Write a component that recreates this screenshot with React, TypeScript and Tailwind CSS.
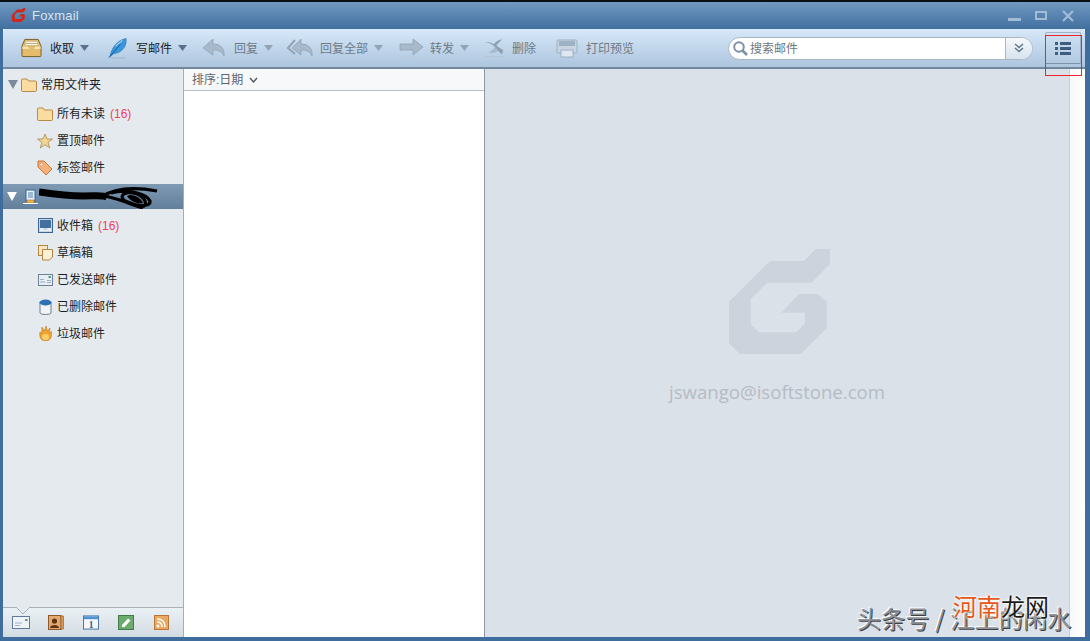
import React from "react";

const Caret = ({ c = "#5d7288" }: { c?: string }) => (
  <svg width="9" height="6" viewBox="0 0 9 6" className="shrink-0"><path d="M0 0H9L4.5 6Z" fill={c} /></svg>
);

const Tool = ({ icon, w, label, gap = 7, caret, dim, ml }: { icon: React.ReactNode; w: number; label: string; gap?: number; caret?: boolean; dim?: boolean; ml: string }) => (
  <div className={`flex items-center h-full ${ml}`}>
    <div className="flex items-center justify-center shrink-0" style={{ width: w, marginRight: gap }}>{icon}</div>
    <span className={`pt-[2px] text-[12px] leading-none whitespace-nowrap ${dim ? "text-[#6e7a86]" : "text-[#1c2026]"}`}>{label}</span>
    {caret && <div className="ml-[6px]"><Caret c={dim ? "#92a5b8" : "#5d7288"} /></div>}
  </div>
);

const Inbox = () => (
  <svg width="22" height="20" viewBox="0 0 22 20">
    <path d="M4 1H18L21 8V18Q21 19 20 19H2Q1 19 1 18V8Z" fill="#e3bd6b" stroke="#7a5a22" />
    <path d="M4.500 3H17.500V5H4.500ZM4 5.500H18V7.500H4Z" fill="#fff" stroke="#a98f5a" strokeWidth=".5" />
    <path d="M1.500 8.500H7L8.500 11H13.500L15 8.500H20.500V11H1.500Z" fill="#f6e2ad" />
  </svg>
);
const Feather = () => (
  <svg width="21" height="22" viewBox="0 0 21 22">
    <path d="M2 20C4 11 9 3 19 1C20 9 15 16 6 17Z" fill="#3b97dc" stroke="#1f6fb0" strokeWidth=".6" />
    <path d="M1 21L13 7" stroke="#0e5a9c" strokeWidth="1" />
    <path d="M8 9L15 3" stroke="#9fd3f4" strokeWidth="1.300" />
    <path d="M2 21.500H18" stroke="#9db4ca" strokeWidth="1" />
  </svg>
);
const G = "#a7b9ca";
const Reply = () => (
  <svg width="24" height="21" viewBox="0 0 24 21">
    <path d="M11 1L1 10L11 17V12C16 12 20 13 22 18C23 10 18 6 11 6Z" fill={G} stroke="#8fa3b6" strokeWidth=".8" />
    <path d="M2 20H23" stroke="#bccbd9" />
  </svg>
);
const ReplyAll = () => (
  <svg width="27" height="21" viewBox="0 0 27 21">
    <path d="M8 2L1 10L8 16" fill="none" stroke="#8fa3b6" strokeWidth="2" />
    <path d="M14 1L5 10L14 17V12C19 12 23 13 25 18C26 10 21 6 14 6Z" fill={G} stroke="#8fa3b6" strokeWidth=".8" />
    <path d="M3 20H26" stroke="#bccbd9" />
  </svg>
);
const Forward = () => (
  <svg width="24" height="21" viewBox="0 0 24 21">
    <path d="M1 6H14V1L24 9L14 17V12H1Z" fill={G} stroke="#8fa3b6" strokeWidth=".8" />
    <path d="M1 19.500H23" stroke="#bccbd9" />
  </svg>
);
const Del = () => (
  <svg width="21" height="20" viewBox="0 0 21 20">
    <path d="M1 4C6 4 10 7 14 12L19 17L20 12C16 10 14 8 13 7C15 5 17 3 19 1C16 1 13 3 10 6C7 4 4 3 1 4Z" fill="#8ea1b3" />
    <path d="M5 15C8 13 10 11 12 9L15 13C12 15 9 16 5 15Z" fill="#a7b9ca" />
    <path d="M0 19H21" stroke="#b3c3d2" />
  </svg>
);
const Printer = () => (
  <svg width="22" height="20" viewBox="0 0 22 20">
    <rect x="1" y="2" width="20" height="13" rx="1" fill="#c7d5e2" stroke="#9db0c2" />
    <rect x="3" y="3" width="16" height="5" fill="#9fb2c4" />
    <rect x="5" y="12" width="12" height="7" fill="#dfe8f0" stroke="#9db0c2" />
  </svg>
);
const Folder = ({ w = 16 }: { w?: number }) => (
  <svg width={w} height="14" viewBox="0 0 16 14">
    <path d="M.5 12.500V2Q.5 1 1.500 1H6L7.500 3H14.500Q15.500 3 15.500 4V12.500Q15.500 13.500 14.500 13.500H1.500Q.5 13.500 .5 12.500Z" fill="#fbdca0" stroke="#b78a45" />
  </svg>
);
const Star = () => (
  <svg width="16" height="16" viewBox="0 0 16 16"><path d="M8 1L10 6H15.500L11 9.500L12.800 15L8 11.700L3.200 15L5 9.500L.5 6H6Z" fill="#f0d690" stroke="#a98c50" strokeWidth=".8" /></svg>
);
const Tag = () => (
  <svg width="16" height="16" viewBox="0 0 16 16">
    <path d="M1 1H7L15 9L9 15L1 7Z" fill="#f2b27a" stroke="#c9743a" />
    <circle cx="4.500" cy="4.500" r="1.500" fill="#fff" stroke="#c9743a" strokeWidth=".6" />
  </svg>
);
const Inbox2 = () => (
  <svg width="15" height="15" viewBox="0 0 15 15">
    <rect x=".5" y=".5" width="14" height="14" fill="#c8d7e6" stroke="#3c6592" />
    <rect x="2" y="2" width="11" height="8" fill="#44709f" />
    <path d="M2 10H5L6 12H9L10 10H13V13H2Z" fill="#e8eef4" />
  </svg>
);
const Draft = () => (
  <svg width="15" height="16" viewBox="0 0 15 16">
    <rect x=".5" y=".5" width="9" height="10" fill="#f7e6c6" stroke="#b5843f" />
    <path d="M4.500 4.500H14.500V12L11.500 15H4.500Z" fill="#fbf0d8" stroke="#b5843f" />
  </svg>
);
const Sent = () => (
  <svg width="15" height="12" viewBox="0 0 15 12">
    <rect x=".5" y=".5" width="14" height="11" fill="#e6edf3" stroke="#6d8197" />
    <path d="M2 8H7M2 5.500H6M9 8.500H13M9 6.500H13" stroke="#8aa0b5" strokeWidth=".8" />
    <rect x="10.500" y="2" width="2.500" height="2" fill="#5a9a8b" />
  </svg>
);
const Trash = () => (
  <svg width="13" height="16" viewBox="0 0 13 16">
    <path d="M1 3V14Q1 15.500 6.500 15.500Q12 15.500 12 14V3Z" fill="#f0f3f6" stroke="#6f7f90" />
    <ellipse cx="6.500" cy="3.500" rx="6" ry="3" fill="#2f6fb5" />
  </svg>
);
const Flame = () => (
  <svg width="13" height="15" viewBox="0 0 13 15">
    <path d="M1 6L2.500 8L3 1L5.500 5L7 0L8.500 5L11 2L10.500 7L12.500 5.500C13.500 11 11 15 6.500 15C2 15 0 11 1 6Z" fill="#eea32e" stroke="#b8701a" strokeWidth=".5" />
    <ellipse cx="6.500" cy="11" rx="3.500" ry="3" fill="#f9cf6a" />
  </svg>
);

const Row = ({ icon, label, count }: { icon: React.ReactNode; label: string; count?: string }) => (
  <div className="flex items-center h-[27px] pl-[34px]">
    <div className="w-[16px] mr-[4px] flex justify-center items-center shrink-0">{icon}</div>
    <span className="text-[12px] leading-none text-[#1b1f24] whitespace-nowrap">{label}</span>
    {count && <span className="ml-[5px] text-[12px] leading-none text-[#ee3f5e] font-['Liberation_Sans',sans-serif]">{count}</span>}
  </div>
);

const Cell = ({ children }: { children: React.ReactNode }) => (
  <div className="w-[35.25px] flex justify-center items-center shrink-0">{children}</div>
);

export default function App() {
  return (
    <div className="relative w-[1090px] h-[641px] overflow-hidden bg-[#3f6d9e] border-t-2 border-t-[#0c0f14] flex flex-col font-['Liberation_Sans','Noto_Sans_CJK_SC',sans-serif]">
      {/* title bar */}
      <div className="h-[27px] shrink-0 flex items-center bg-gradient-to-b from-[#7199c2] to-[#41709f]">
        <svg width="15" height="14" viewBox="0 0 303 315" className="ml-[11px] mt-[-2px]">
          <path d="M260 0H303V45L247 101H115L65 151V225L90 250H202L228 223V191H157L210 135H267L293 158V238L215 315H33L0 283V158L123 36H225Z" fill="#d3261b" />
        </svg>
        <span className="ml-[6px] text-[13px] leading-none text-[#d8e4ef] font-['Liberation_Sans',sans-serif] tracking-[0.2px]">Foxmail</span>
        <div className="ml-auto mr-[16px] flex items-center">
          <div className="w-[13px] h-[3px] bg-[#a3bcd5] mt-[8px]" />
          <div className="ml-[14px] w-[12px] h-[9px] border-2 border-[#a3bcd5]" />
          <svg width="12" height="12" viewBox="0 0 12 12" className="ml-[15px]"><path d="M1 1L11 11M11 1L1 11" stroke="#a3bcd5" strokeWidth="2.200" /></svg>
        </div>
      </div>

      {/* body */}
      <div className="flex-1 min-h-0 flex flex-col ml-[3px] mr-[5px] mb-[4px] bg-white">
        {/* toolbar */}
        <div className="relative h-[40px] shrink-0 flex items-center pl-[18px] rounded-tl-[3px] rounded-tr-[3px] bg-gradient-to-b from-[#d7e8f9] to-[#adc5de] border-b-2 border-[#73879c]">
          <Tool ml="ml-0" w={21} gap={8} icon={<Inbox />} label="收取" caret />
          <Tool ml="ml-[19px]" w={20} gap={8} icon={<Feather />} label="写邮件" caret />
          <Tool ml="ml-[15px]" w={24} gap={8} icon={<Reply />} label="回复" caret dim />
          <Tool ml="ml-[14px]" w={27} gap={6} icon={<ReplyAll />} label="回复全部" caret dim />
          <Tool ml="ml-[16px]" w={24} icon={<Forward />} label="转发" caret dim />
          <Tool ml="ml-[15px]" w={20} gap={8} icon={<Del />} label="删除" dim />
          <Tool ml="ml-[20px]" w={22} gap={8} icon={<Printer />} label="打印预览" dim />
          <div className="ml-[94px] w-[305px] h-[23px] flex items-center rounded-full border border-[#a9b6c3] bg-white overflow-hidden">
            <svg width="17" height="17" viewBox="0 0 17 17" className="ml-[3px] shrink-0">
              <circle cx="7" cy="7" r="4.800" fill="none" stroke="#7d91a5" strokeWidth="2" />
              <path d="M10.500 10.500L15 15" stroke="#7d91a5" strokeWidth="2.600" />
            </svg>
            <span className="ml-[1px] pt-[1px] text-[12px] leading-none text-[#6f7780]">搜索邮件</span>
            <div className="ml-auto w-[27px] h-full border-l border-[#a9b6c3] bg-gradient-to-b from-[#f5f8fb] to-[#d8e3ee] flex items-center justify-center">
              <svg width="10" height="10" viewBox="0 0 10 10"><path d="M1 1L5 4.500L9 1M1 5L5 8.500L9 5" fill="none" stroke="#5f7488" strokeWidth="1.400" /></svg>
            </div>
          </div>
          <div className="ml-[12px] w-[36px] h-[32px] border border-[#9fb4ca] border-b-[#7f93a8] rounded-t-[2px] flex flex-col items-center justify-center gap-[2px] bg-gradient-to-b from-[#cfe1f3] to-[#b2c9e0]">
            {[0, 1, 2].map((i) => (
              <div key={i} className="flex gap-[2px]">
                <div className="w-[3px] h-[3px] bg-[#3f5e7f]" />
                <div className="w-[11px] h-[3px] bg-[#3f5e7f]" />
              </div>
            ))}
          </div>
        </div>

        {/* columns */}
        <div className="flex-1 min-h-0 flex">
          {/* sidebar */}
          <div className="w-[181px] shrink-0 flex flex-col bg-[#e5eaef] border-r border-[#a4aeb8]">
            <div className="flex items-center h-[27px] mt-[2px] pl-[5px]">
              <svg width="10" height="9" viewBox="0 0 10 9" className="shrink-0"><path d="M0 0H10L5 9Z" fill="#7a8a9a" /></svg>
              <div className="ml-[3px] mr-[4px]"><Folder /></div>
              <span className="text-[12px] leading-none text-[#1b1f24]">常用文件夹</span>
            </div>
            <div className="mt-[2px]">
              <Row icon={<Folder />} label="所有未读" count="(16)" />
              <Row icon={<Star />} label="置顶邮件" />
              <Row icon={<Tag />} label="标签邮件" />
            </div>
            <div className="mt-[3px] h-[25px] flex items-center pl-[4px] bg-gradient-to-b from-[#7f9ab3] to-[#627f9c] relative">
              <svg width="10" height="9" viewBox="0 0 10 9" className="shrink-0"><path d="M0 0H10L5 9Z" fill="#fff" /></svg>
              <svg width="15" height="16" viewBox="0 0 15 16" className="ml-[6px]">
                <rect x="3" y="1" width="9" height="11" fill="#e8f0f7" stroke="#2f66a0" />
                <path d="M5 4H10M5 6H10M5 8H10" stroke="#2f66a0" strokeWidth=".8" />
                <rect x="4" y="11" width="7" height="3" fill="#f3b545" stroke="#a56f17" strokeWidth=".6" />
                <path d="M0 14.500H15" stroke="#fff" />
              </svg>
              <svg width="122" height="25" viewBox="0 0 122 25" className="ml-[1px] shrink-0">
                <path d="M0 8C14 10 30 12 44 12C58 12 64 11 68 13" fill="none" stroke="#000" strokeWidth="7" />
                <path d="M2 9C20 13 48 12 62 13" fill="none" stroke="#000" strokeWidth="4" />
                <path d="M62 13C74 5 92 2 118 7M66 12C84 16 96 22 104 24M72 9C88 4 108 10 111 17C112 24 96 22 86 17C80 13 84 7 94 9C104 11 110 19 104 23" fill="none" stroke="#000" strokeWidth="3.200" />
                <path d="M88 12C94 9 102 14 104 19C98 20 92 18 88 12Z" fill="#000" />
              </svg>
            </div>
            <div className="mt-[3px]">
              <Row icon={<Inbox2 />} label="收件箱" count="(16)" />
              <Row icon={<Draft />} label="草稿箱" />
              <Row icon={<Sent />} label="已发送邮件" />
              <Row icon={<Trash />} label="已删除邮件" />
              <Row icon={<Flame />} label="垃圾邮件" />
            </div>
            <div className="mt-auto relative h-[30px] flex items-center border-t border-[#a8b2bb] bg-gradient-to-b from-[#e9f1f5] to-[#d4dce3]">
              <svg width="14" height="8" viewBox="0 0 14 8" className="absolute left-[13px] top-[-1px]"><path d="M0 0L7 7L14 0" fill="#e5eaef" stroke="#a8b2bb" /></svg>
              <Cell><svg width="18" height="14" viewBox="0 0 18 14"><rect x=".5" y=".5" width="17" height="12" fill="#eef3f8" stroke="#63799a" /><path d="M3 7H10M3 9.500H8" stroke="#9db2c6" /><rect x="13" y="3" width="2.500" height="2" fill="#5a9a8b" /></svg></Cell>
              <Cell><svg width="16" height="15" viewBox="0 0 16 15"><rect x=".5" y=".5" width="12.500" height="14" fill="#e6a86e" stroke="#8d5a2b" /><rect x="13" y="1" width="2.500" height="13" fill="#d99a5e" stroke="#8d5a2b" strokeWidth=".6" /><circle cx="6.500" cy="6" r="2.600" fill="#5c3517" /><path d="M2 13C2 9 11 9 11 13Z" fill="#5c3517" /></svg></Cell>
              <Cell><svg width="16" height="15" viewBox="0 0 17 15"><rect x=".5" y=".5" width="16" height="14" fill="#f4f7fa" stroke="#41729f" /><rect x="1" y="1" width="15" height="3" fill="#4f93d6" /><text x="8.500" y="13" textAnchor="middle" fontSize="10" fontWeight="700" fill="#2f5f90" fontFamily="Liberation Serif">1</text></svg></Cell>
              <Cell><svg width="16" height="15" viewBox="0 0 16 15"><rect x=".5" y=".5" width="15" height="14" fill="#6cab6e" stroke="#437a47" /><path d="M4 10L10 3.500L12.500 5.500L6.500 12H4Z" fill="#fff" /></svg></Cell>
              <Cell><svg width="15" height="15" viewBox="0 0 15 15"><rect x=".5" y=".5" width="14" height="14" fill="#eba860" stroke="#b8763a" /><circle cx="4" cy="11" r="1.500" fill="#fff" /><path d="M3 7C6 7 8 9 8 12M3 4C8 4 11 7 11 12" fill="none" stroke="#fff" strokeWidth="1.500" /></svg></Cell>
            </div>
          </div>

          {/* list */}
          <div className="w-[301px] shrink-0 flex flex-col bg-white border-r border-[#8c98a4]">
            <div className="h-[22px] shrink-0 flex items-center pl-[8px] bg-[#f6f8fa] border-b border-[#b6bec6]">
              <span className="text-[12px] leading-none text-[#5c6670]">排序:日期</span>
              <svg width="9" height="6" viewBox="0 0 9 6" className="ml-[6px]"><path d="M1 1L4.500 5L8 1" fill="none" stroke="#4f5a66" strokeWidth="1.400" /></svg>
            </div>
          </div>

          {/* preview */}
          <div className="w-[585px] shrink-0 flex flex-col items-center bg-[#dbe1e8] border-r border-[#c9d0d7] pt-[180px]">
            <svg width="101" height="105" viewBox="0 0 303 315" className="ml-[5px]">
              <path d="M260 0H303V45L247 101H115L65 151V225L90 250H202L228 223V191H157L210 135H267L293 158V238L215 315H33L0 283V158L123 36H225Z" fill="#ccd3dc" />
            </svg>
            <span className="mt-[29px] text-[18.6px] leading-none text-[#b4bcc5] font-['Open_Sans',sans-serif]">jswango@isoftstone.com</span>
          </div>
          <div className="flex-1 bg-gradient-to-r from-[#f6f8f9] to-white" />
        </div>
      </div>

      {/* image overlays */}
      <svg width="38" height="42" viewBox="0 0 38 42" className="absolute left-[1045px] top-[33px] pointer-events-none">
        <rect x=".5" y=".5" width="36" height="40" fill="none" stroke="#f0232b" />
      </svg>
      <div className="absolute left-[857px] top-[601px] text-[24px] leading-[30px] tracking-[0.2px] text-[#8f9398] whitespace-nowrap [text-shadow:1px_1px_0_#3d4247,-1px_-1px_0_#fff] font-['Noto_Sans_CJK_SC',sans-serif]">头条号 / 江上的闲水</div>
      <div className="absolute left-[953px] top-[587px] text-[24px] leading-[34px] whitespace-nowrap [text-shadow:0_0_3px_#fff,0_0_3px_#fff,0_0_2px_#fff] font-['Noto_Sans_CJK_SC',sans-serif]">
        <span className="text-[#e4591a]">河南</span><span className="text-[#1c1c1c]">龙网</span>
      </div>
    </div>
  );
}
